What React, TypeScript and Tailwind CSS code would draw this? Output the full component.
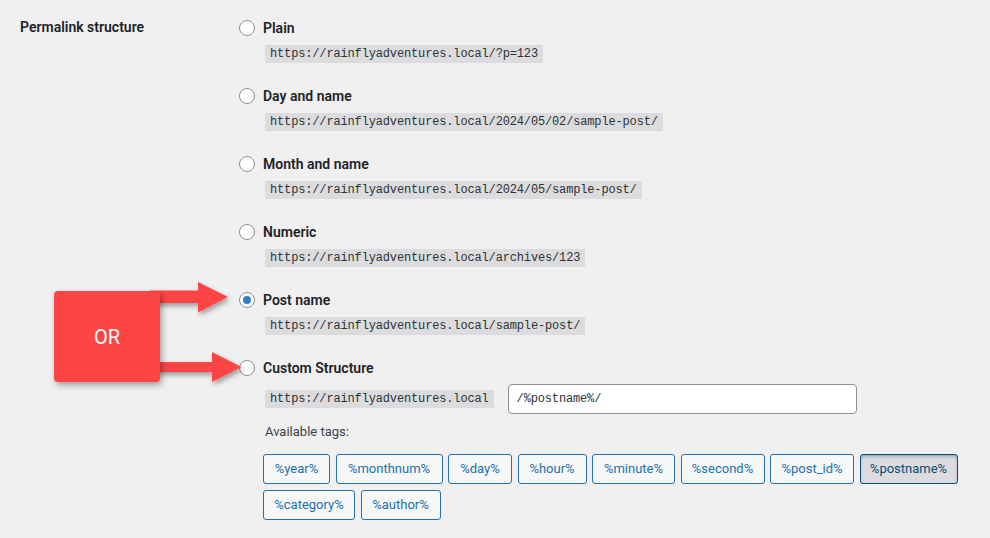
import React from "react"

const FONT = "font-['Roboto','Noto_Sans',sans-serif]"
const MONO = "font-['Liberation_Mono','DejaVu_Sans_Mono',monospace]"

const options = [
  { label: "Plain", url: "https://rainflyadventures.local/?p=123" },
  { label: "Day and name", url: "https://rainflyadventures.local/2024/05/02/sample-post/" },
  { label: "Month and name", url: "https://rainflyadventures.local/2024/05/sample-post/" },
  { label: "Numeric", url: "https://rainflyadventures.local/archives/123" },
  { label: "Post name", url: "https://rainflyadventures.local/sample-post/", checked: true },
]

const tags = [
  { t: "%year%", w: "w-[67px]" },
  { t: "%monthnum%", w: "w-[107px]" },
  { t: "%day%", w: "w-[64px]" },
  { t: "%hour%", w: "w-[69px]" },
  { t: "%minute%", w: "w-[83px]" },
  { t: "%second%", w: "w-[84px]" },
  { t: "%post_id%", w: "w-[84px]" },
  { t: "%postname%", w: "w-[98px]", pressed: true },
  { t: "%category%", w: "w-[92px]" },
  { t: "%author%", w: "w-[80px]" },
]

function Radio({ checked }: { checked?: boolean }) {
  return (
    <span className="w-4 h-4 shrink-0 rounded-full border border-[#8c8f94] bg-white flex items-center justify-center">
      {checked && <span className="w-2 h-2 rounded-full bg-[#2f7fc4]" />}
    </span>
  )
}

function Code({ children }: { children: React.ReactNode }) {
  return (
    <code className={`${MONO} block bg-[#dcdcde] px-[5px] text-[12px] tracking-[-0.15px] leading-[18px] text-[#2c3338]`}>
      {children}
    </code>
  )
}

export default function App() {
  return (
    <div className={`${FONT} relative w-full min-h-[538px] bg-[#f0f0f1] text-[#1d2327] overflow-hidden`}>
      <div className="flex pt-[17px] pl-[20px]">
        <div className="w-[219px] shrink-0 text-[14px] font-semibold leading-[20px]">Permalink structure</div>

        <div className="flex flex-col gap-[22px]">
          {options.map(o => (
            <div key={o.label} className="flex flex-col">
              <label className="flex items-center h-[22px] gap-[8px]">
                <Radio checked={o.checked} />
                <span className="text-[14px] font-semibold">{o.label}</span>
              </label>
              <div className="mt-[6px] ml-[26px] flex">
                <Code>{o.url}</Code>
              </div>
            </div>
          ))}

          <div className="flex flex-col">
            <label className="flex items-center h-[22px] gap-[8px]">
              <Radio />
              <span className="text-[14px] font-semibold">Custom Structure</span>
            </label>
            <div className="mt-[5px] ml-[26px] flex items-center gap-[14px]">
              <Code>https://rainflyadventures.local</Code>
              <div className={`${MONO} w-[349px] h-[30px] bg-white border border-[#8c8f94] rounded-[4px] px-[8px] flex items-center text-[12px] tracking-[-0.15px] text-[#2c3338]`}>
                /%postname%/
              </div>
            </div>
            <p className="mt-[8px] ml-[26px] text-[13px] leading-[20px] text-[#3c434a]">Available tags:</p>
            <div className="mt-[12px] ml-[24px] w-[700px] flex flex-wrap gap-x-[5.5px] gap-y-[6px]">
              {tags.map(tag => (
                <span
                  key={tag.t}
                  className={`${tag.w} h-[30px] rounded-[3px] border flex items-center justify-center text-[13px] ${
                    tag.pressed
                      ? "bg-[#dcdcde] border-[#0a4b78] text-[#0a4b78] shadow-[inset_0_2px_5px_-3px_#0a4b78]"
                      : "bg-[#f6f7f7] border-[#2271b1] text-[#2271b1]"
                  }`}
                >
                  {tag.t}
                </span>
              ))}
            </div>
          </div>
        </div>
      </div>

      {/* annotation overlay */}
      <svg className="absolute inset-0 pointer-events-none" width="990" height="538">
        <defs>
          <filter id="sh" x="-20%" y="-20%" width="140%" height="140%">
            <feDropShadow dx="2" dy="3" stdDeviation="2.5" floodColor="#000" floodOpacity="0.35" />
          </filter>
        </defs>
        <polygon filter="url(#sh)" fill="#fe4444" points="150,290.5 198,290.5 198,282 228,297 198,312.5 198,303 150,303" />
        <polygon filter="url(#sh)" fill="#fe4444" points="150,362 212,362 212,352 241.5,367 212,382 212,372 150,372" />
      </svg>
      <div className="absolute left-[54px] top-[291px] w-[106px] h-[91px] rounded-[4px] bg-[#fe4444] shadow-[2px_3px_6px_rgba(0,0,0,0.35)] flex items-center justify-center text-white text-[20px]">
        OR
      </div>
    </div>
  )
}
